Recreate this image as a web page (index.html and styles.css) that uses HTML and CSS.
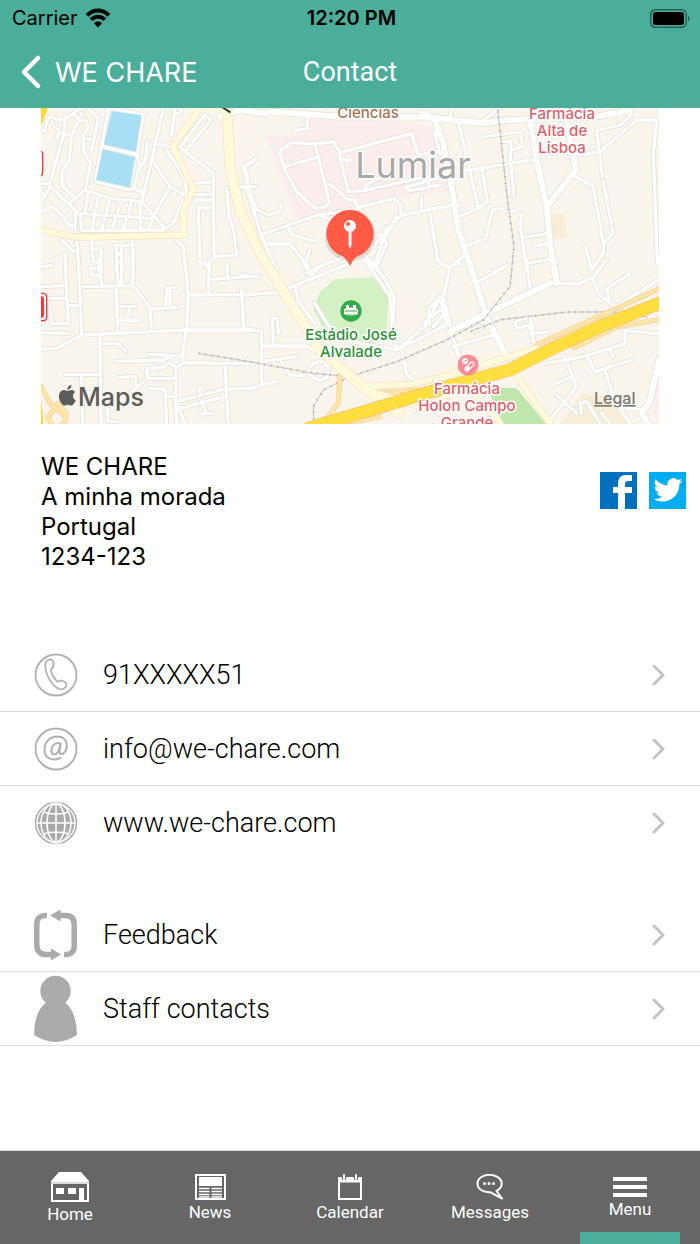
FILE: index.html
```html
<!DOCTYPE html>
<html lang="en">
<head>
<meta charset="utf-8">
<meta name="viewport" content="width=device-width, initial-scale=1">
<title>Contact</title>
<link rel="stylesheet" href="styles.css">
</head>
<body>
<div class="app">
  <header class="header">
    <div class="status">
      <div class="carrier">
        <span>Carrier</span>
        <svg width="26" height="20" viewBox="0 0 26 20" fill="none" stroke="#000" stroke-width="4" aria-hidden="true">
          <path d="M2 7.2Q13-2.2 24 7.2"/><path d="M6 11.6Q13 5.6 20 11.6"/><path d="M9 15.2Q13 11.4 17 15.2L13 19.4Z" fill="#000" stroke="none"/>
        </svg>
      </div>
      <time class="clock">12:20 PM</time>
      <svg class="battery" width="41" height="19" viewBox="0 0 41 19" aria-hidden="true">
        <rect x=".8" y=".8" width="35.4" height="17.4" rx="4.5" fill="none" stroke="#000" stroke-opacity=".45" stroke-width="1.5"/>
        <rect x="3" y="3" width="31" height="13" rx="2.5"/><path d="M38 6.5q3 3 0 6z" opacity=".5"/>
      </svg>
    </div>
    <nav class="navbar">
      <button class="back" type="button">
        <svg width="21" height="34" viewBox="0 0 21 34" fill="none" stroke="#fff" stroke-width="4.5" stroke-linecap="round" stroke-linejoin="round" aria-hidden="true"><path d="M18 3 4 17 18 31"/></svg>
        <span>WE CHARE</span>
      </button>
      <h1 class="title">Contact</h1>
    </nav>
  </header>

  <main class="main">
    <section class="map" aria-label="Map">
      <svg class="map-canvas" viewBox="0 0 618 316">
        <defs>
          <g id="minor">
            <g transform="translate(-33 -24)">
              <path d="M33 95 45 92 50 65 60 50 95 62 130 40 150 24M80 115 87 90 75 80M105 60 100 105 60 250 33 250M95 100 125 105M155 40 125 105 118 180 95 215 97 255 130 290M130 40 150 65 168 60 175 80 160 105 160 150 182 190 165 270 120 310M175 24 205 55 185 150M170 115 190 120"/>
              <path d="M235 24 215 140 195 245 295 270 310 265 340 280M245 24 340 45 320 165 330 195 310 265M215 140 320 163M352 125 347 175 330 205M400 24 365 180 335 305M375 130 420 140M435 24 425 105M436 42 450 40 455 24M365 180 420 260 465 285M420 260 370 350M410 150 465 235 470 280"/>
              <path d="M335 305 405 385M405 385 430 370 460 300M165 270 240 295 335 305M145 340 365 355M155 392 400 390M175 280 165 340M150 340 155 390M205 290 185 390M240 295 215 390M275 300 245 390M305 303 280 390M330 305 332 390M370 350 355 390M60 260 120 315 145 340M95 255 130 290M33 335 65 318 105 355 115 375 135 378M60 260 33 305M45 290 33 275M135 330 137 395"/>
              <path d="M450 140 525 45 543 60 465 155 550 220 552 470 620 465 610 385 597 350 590 265M450 140 465 155M495 250 550 245M495 283 550 283M495 300 550 300M550 324 505 324 510 485 530 495 555 470M530 495 540 510M33 500 65 497M105 460 108 510M95 420 130 455 145 450M140 415 147 510M185 420 190 485 215 490M185 445 215 447M212 447 215 510M255 437 305 435M260 437 260 510M275 437 275 510M260 462 275 462M260 485 275 485M308 415 310 510M435 415 460 440 467 510M670 185 645 200 655 250M625 260 680 260"/>
            </g>
            <g transform="translate(597 -24)">
              <path d="M205 40 200 88 165 90M50 175 10 200 25 260 50 330 85 345 120 335 122 310M0 260 20 265 65 410 110 510M118 155 155 128 225 132 280 125 295 150 325 275 370 272 560 230 660 215M118 155 135 210 170 275 225 325 255 322 268 305 225 132M135 200 230 172M258 250 280 260 325 300 345 300 355 325M300 158 515 100 535 165 595 155M300 180 335 180"/>
              <path d="M60 405 235 345 310 335 460 295 480 310 483 345M235 345 300 370M483 345 640 315 660 315M545 290 545 335M483 345 400 440 260 490 200 520M145 385 155 403 225 425M75 432 150 432 205 500M210 450 195 490M570 340 595 485 625 500 660 490M583 95 600 160M380 270 375 255 420 235M600 255 510 272 495 262 590 235M560 235 570 260M375 465 410 510M440 380 430 420 400 500M420 400 440 430 410 500M470 350 420 440"/>
            </g>
            <g transform="translate(1227 -24)">
              <path d="M100 60 150 24M5 24 0 50M25 65 85 325 25 350M95 200 112 305 85 325M20 215 60 210 255 178M105 110 210 95 218 140 185 150 180 122 160 125M180 150 192 290M45 440 108 415 127 330 155 325 165 335 200 330M380 165 450 155 560 60 620 60 610 160 622 490 635 500M540 24 540 50 510 75 440 92 457 230M460 245 490 400 460 430M370 225 430 260 460 430 460 460 425 510M407 440 425 510M217 340 210 370 230 510M217 412 295 400M255 438 298 430M230 490 300 478M0 500 40 470M130 515 170 497"/>
            </g>
            <g transform="translate(-33 456)">
              <path d="M33 20 65 17M33 80 105 77M105 0 115 190 65 190 60 150M33 115 110 115M110 137 150 137M33 218 115 220M145 0 155 225M33 268 80 265 155 225 465 210 670 210M155 80 310 77 360 140 365 215M258 80 263 215M265 140 315 140M265 183 330 180M300 140 290 180M365 147 445 142M407 145 410 85 435 82M420 85 420 145M310 0 308 75M205 0 215 72M205 25 180 25 185 45 205 48M260 0 265 75M275 0 275 75"/>
              <path d="M465 0 475 105 470 205 457 285M475 105 670 103M535 100 538 15 515 10M538 58 660 50M592 12 592 55M635 90 642 205M210 230 213 490M210 250 265 250 287 272M260 304 400 300 420 290M355 283 460 288 462 308 670 312M462 308 440 322 415 308 405 320 350 327 353 355 305 395M265 352 315 350 318 375M353 355 437 355M437 322 437 420 465 490M105 343 210 343M155 345 158 490M165 397 210 397M358 385 405 388 410 490M410 410 437 410M440 425 585 387 670 385M450 445 585 410M585 312 595 490M508 380 512 400M515 425 530 460M510 462 548 460M437 420 440 490M232 440 235 485 260 485"/>
            </g>
            <g transform="translate(597 456)">
              <path d="M0 45 60 52M0 105 110 98 330 10M165 80 175 125 225 190M190 10 215 45 240 20M5 90 10 205 65 215 65 375 35 385 0 385M65 375 110 365M100 255 97 175 112 175 115 220M65 258 200 258 225 275M65 305 170 290M125 305 150 345 195 347M220 310 245 302 265 320 262 350 240 362 215 350 205 330ZM225 130 270 205 330 245 420 260 470 270M375 0 450 110 455 200 470 270M390 0 430 50 462 110 460 190M470 270 560 195 600 110M470 270 620 195 600 110 565 150 570 190M485 265 500 345 520 360 560 360M590 0 630 25 610 110 640 240 655 280M550 190 600 150M580 200 610 165"/>
            </g>
            <g transform="translate(1227 456)">
              <path d="M85 65 170 18M230 0 240 80M300 70 385 72 430 50 470 0M425 50 445 100 495 140 627 60M540 42 470 85 480 130M10 260 130 225M0 215 20 270 25 290M75 215 100 200M255 250 235 195 200 205 195 185 240 170 250 220 295 215M627 222 525 212 525 250 480 265 400 290 290 310M480 265 490 290M410 285 435 335 545 300M465 330 490 410M345 290 380 380 300 480M320 370 365 350M320 405 380 460M500 440 580 450M395 460 390 430 410 425 450 490M455 460 480 490M500 430 540 490"/>
            </g>
          </g>
          <g id="main">
            <g transform="translate(597 -24)"><path d="M-60 50 0 30 70 40 100 35 300 50 560 50 660 62 730 70 810 60 1070 50 1170 30M550 40 585 60 610 130 635 260 655 390 695 510 740 650 800 770M870 60 890 180 920 320 930 430 950 550M980 60 1008 210 920 320"/></g>
            <g transform="translate(1227 456)"><path d="M320 65 310 0M300 70 215 110 100 165 0 215M627 300 600 420 575 460 600 500"/></g>
          </g>
          <g id="avenue">
            <path d="M0 366 107 388 427 381 427 306 457 241 395 116 477 0"/>
            <path d="M440 -5 557 5" stroke-width="12"/>
            <path d="M977 836 1117 828 1227 801 1487 721M1417 790 1530 950M1280 830 1380 950M990 850 1150 900 1227 860"/>
          </g>
          <path id="boulevard" d="M557 0 567 176 597 306 657 436 837 726 977 846 1077 916"/>
          <path id="ramp" d="M897 801 892 886 857 931M917 946 1017 926M997 856 1137 846M1487 710 1860 540M1600 720 1727 656 1854 635M0 836 30 890 75 925 70 948 40 960 20 930 50 888 75 915"/>
          <path id="highway" d="M805 960 997 903 1227 834 1407 785 1527 725 1677 655 1860 584"/>
        </defs>

        <g transform="scale(.333333)">
          <path class="land" d="M0 0H1854V948H0Z"/>
          <path class="campus" d="M677 84 787 81 807 21 1117 46 1187 66 1227 246 1057 266 767 336ZM1854 790 1832 900 1854 948Z"/>
          <path class="block" d="M1527 321 1567 314 1580 388 1537 396ZM1622 856 1697 866 1767 950 1557 950Z"/>
          <path class="stadium" d="M882 514 997 508 1007 521 1017 518 1042 556 1037 666 997 706 867 696 817 606 837 551Z"/>
          <path class="park" d="M1337 836 1427 841 1515 948 1387 948Z"/>
          <use href="#minor" class="casing minor"/>
          <use href="#main" class="casing wide"/>
          <use href="#minor" class="road minor"/>
          <use href="#main" class="road wide"/>
          <path class="pool" d="M212 10 302 21 285 131 189 109ZM185 124 282 148 267 238 165 216Z"/>
          <path class="rail" d="M1370 6 1377 66 1397 256 1419 416 1407 536 1367 586 1327 636 1227 691 1070 760 927 806 847 846 817 896 819 948M472 736 597 756 707 776 817 796 927 806M1290 670 1380 635 1580 612 1730 612 1820 628"/>
          <path class="rail ties" d="M1370 6 1377 66 1397 256 1419 416 1407 536 1367 586 1327 636 1227 691 1070 760 927 806 847 846 817 896 819 948M472 736 597 756 707 776 817 796 927 806M1290 670 1380 635 1580 612 1730 612 1820 628"/>
          <use href="#ramp" class="ramp-edge"/><use href="#ramp" class="ramp"/>
          <use href="#avenue" class="avenue-edge"/><use href="#boulevard" class="avenue-edge broad"/>
          <use href="#avenue" class="avenue"/><use href="#boulevard" class="avenue broad"/>
          <use href="#highway" class="highway-edge"/><use href="#highway" class="highway"/>
          <path class="highway-fill" d="M0 0H21L0 55ZM0 870 8 948H0Z"/>
          <path class="tunnel" d="M540-5 568 13"/>
          <path class="shield" d="M0 130q6 2 5 12v50q0 8-5 12"/>
          <path class="shield-plate" d="M-20 556H5q12 0 12 12v58q0 12-12 12H-20Z"/>
          <path class="shield-fill" d="M0 564q9 0 9 9v48q0 9-9 9Z"/>
        </g>

        <g class="label">
          <text class="brown" x="327" y="10">Ciências</text>
          <text class="district" x="372" y="70">Lumiar</text>
          <text class="red" x="521" y="11">Farmácia</text>
          <text class="red" x="521" y="28">Alta de</text>
          <text class="red" x="521" y="45">Lisboa</text>
          <text class="green" x="310" y="232">Estádio José</text>
          <text class="green" x="310" y="249">Alvalade</text>
          <text class="red" x="426" y="286">Farmácia</text>
          <text class="red" x="426" y="303">Holon Campo</text>
          <text class="red" x="426" y="320">Grande</text>
        </g>

        <circle cx="310" cy="203" r="10.7" fill="#34ab48"/>
        <path d="M303 201q7-3 14 0v5q-7 3-14 0zM305 197h3v3h-3zM312 197h3v3h-3z" fill="#fff"/>
        <path d="M304 203h12M307 206v2M310 206v2M313 206v2" stroke="#34ab48"/>
        <circle cx="427" cy="257" r="10.5" fill="#f98d93"/>
        <circle cx="424" cy="253" r="3" fill="#fff"/><path d="M422 254l4-2" stroke="#f98d93"/>
        <path d="M426 261l5-5" stroke="#fff" stroke-width="5" stroke-linecap="round"/><path d="M429 258l2-2" stroke="#f98d93" stroke-width="2.5" stroke-linecap="round"/>

        <ellipse cx="309" cy="130" rx="25" ry="23" fill="#000" opacity=".1"/>
        <path d="M309 102a23.7 23.7 0 0 1 9 45.600C313 150 311 154 309 158C307 154 305 150 300 147.600A23.700 23.700 0 0 1 309 102Z" fill="#ff5a45"/>
        <circle cx="309" cy="118" r="6" fill="#fff"/><path d="M307.500 123h3v14l-1.500 4-1.500-4z" fill="#fff"/><circle cx="307" cy="116" r="2" fill="#ff5a45"/>

        <g class="brand">
          <path transform="translate(16 277) scale(.86)" d="M12.152 6.896c-.948 0-2.415-1.078-3.960-1.040-2.040.027-3.910 1.183-4.961 3.014-2.117 3.675-.546 9.103 1.519 12.090 1.013 1.454 2.208 3.090 3.792 3.039 1.520-.065 2.090-.987 3.935-.987 1.831 0 2.350.987 3.960.948 1.637-.026 2.676-1.480 3.676-2.948 1.156-1.688 1.636-3.325 1.662-3.415-.039-.013-3.182-1.221-3.220-4.857-.026-3.040 2.480-4.494 2.597-4.559-1.429-2.090-3.623-2.324-4.390-2.376-2-.156-3.675 1.090-4.610 1.090zM15.530 3.830c.843-1.012 1.400-2.427 1.245-3.830-1.207.052-2.662.805-3.532 1.818-.780.896-1.454 2.338-1.273 3.714 1.338.104 2.715-.688 3.559-1.701"/>
          <text class="maps" x="37" y="298">Maps</text>
          <a href="#legal"><text class="legal" x="553" y="296">Legal</text></a>
        </g>
      </svg>
    </section>

    <section class="info">
      <address class="address">WE CHARE<br>A minha morada<br>Portugal<br>1234-123</address>
      <div class="social">
        <a href="#facebook" aria-label="Facebook"><svg viewBox="0 0 37 37"><path fill="#006fbe" d="M0 0h37v37H0z"/><path fill="#fff" d="M18 37V21h-5v-6h5v-3c0-6 3-9 8-9h6v6h-4c-2 0-3 1-3 3v3h7v6h-7v16z"/></svg></a>
        <a href="#twitter" aria-label="Twitter"><svg viewBox="0 0 37 37"><path fill="#00adf2" d="M0 0h37v37H0z"/><path fill="#fff" transform="translate(4.500 3.500) scale(1.200)" d="M23.953 4.570a10 10 0 01-2.825.775 4.958 4.958 0 002.163-2.723c-.951.555-2.005.959-3.127 1.184a4.920 4.920 0 00-8.384 4.482C7.690 8.095 4.067 6.130 1.640 3.162a4.822 4.822 0 00-.666 2.475c0 1.710.870 3.213 2.188 4.096a4.904 4.904 0 01-2.228-.616v.060a4.923 4.923 0 003.946 4.827 4.996 4.996 0 01-2.212.085 4.936 4.936 0 004.604 3.417 9.867 9.867 0 01-6.102 2.105c-.390 0-.779-.023-1.170-.067a13.995 13.995 0 007.557 2.209c9.053 0 13.998-7.496 13.998-13.985 0-.210 0-.420-.015-.630A9.935 9.935 0 0024 4.590z"/></svg></a>
      </div>
    </section>

    <ul class="list">
      <li class="item"><a class="row" href="tel:91">
        <svg class="icon" viewBox="0 0 44 44" fill="none" stroke="#b0b0b0" stroke-width="1.800"><circle cx="22" cy="22" r="20.500"/><path stroke-linejoin="round" d="M11.500 9.500C13 6.500 17 5.500 18.500 7.500C20 9.500 19.500 13 18.500 15C17.500 16 16.500 16.500 17 18C18 22 20.500 26 23.500 28.500C25 29 26 27.500 27.500 27.500C29.500 28 32 30 32.500 32C32.500 35 28 37 25 36C17 32 10 20 11.500 9.500Z"/></svg>
        <span class="text">91XXXXX51</span>
        <svg class="chevron" viewBox="0 0 14 22"><path d="M3 2 12 11 3 20"/></svg></a></li>
      <li class="item"><a class="row" href="mailto:info@we-chare.com">
        <svg class="icon" viewBox="0 0 44 44" fill="none" stroke="#b0b0b0" stroke-width="1.800"><circle cx="22" cy="22" r="20.500"/><path stroke-width="2" stroke-linecap="round" d="M26.500 16.500C24 15.500 21 16 19 18.500C16.500 22 17 27 20 27.500C23 27.500 25.500 23 26.500 16.500ZM26.500 16.500 25.500 24.500C25.500 27.500 28 28 30.500 25.500C34 21 34.500 10 23.500 9.500C15 9.500 10.500 16 10.500 22.500C10.500 31.500 18 34.500 26.500 31"/></svg>
        <span class="text">info@we-chare.com</span>
        <svg class="chevron" viewBox="0 0 14 22"><path d="M3 2 12 11 3 20"/></svg></a></li>
      <li class="item"><a class="row" href="#website">
        <svg class="icon" viewBox="0 0 44 44" fill="none" stroke="#fff" stroke-width="1.500"><circle cx="22" cy="22" r="20.500" stroke="#aaa"/><circle cx="22" cy="22" r="18.500" fill="#aaa" stroke="none"/><path d="M22 3V41M3 22H41M9 11Q22 15 35 11M9 33Q22 29 35 33"/><ellipse cx="22" cy="22" rx="9" ry="19"/><ellipse cx="22" cy="22" rx="15" ry="20"/></svg>
        <span class="text">www.we-chare.com</span>
        <svg class="chevron" viewBox="0 0 14 22"><path d="M3 2 12 11 3 20"/></svg></a></li>
    </ul>

    <ul class="list">
      <li class="item"><a class="row" href="#feedback">
        <svg class="icon feedback" viewBox="0 0 44 52"><path fill="none" stroke="#aaa" stroke-width="5.500" d="M13 6.500C6 6 2.800 9 2.800 15V36C2.800 42 6 45.500 12 45.500H19M30 45.500C37 46 40.200 43 40.200 37V16C40.200 10 38 6.500 32 6.500H25"/><path fill="#aaa" d="M16 6.500 26.500.5V12.500ZM27 45.500 17 39.500V51.500Z"/></svg>
        <span class="text">Feedback</span>
        <svg class="chevron" viewBox="0 0 14 22"><path d="M3 2 12 11 3 20"/></svg></a></li>
      <li class="item closed"><a class="row" href="#staff">
        <svg class="icon staff" viewBox="0 0 44 68" fill="#aaa"><circle cx="21.500" cy="16" r="15.200"/><path d="M13 27C5 32 0 44 .2 60Q21.500 74 42.800 60C43 44 38 32 30 27Z"/></svg>
        <span class="text">Staff contacts</span>
        <svg class="chevron" viewBox="0 0 14 22"><path d="M3 2 12 11 3 20"/></svg></a></li>
    </ul>
  </main>

  <nav class="tabs" aria-label="Main">
    <a class="tab" href="#home">
      <svg width="38" height="30" viewBox="0 0 38 30"><path fill="#fff" d="M8 0H30L38 9V10H0V9Z"/><path fill="#ddd" d="M0 10H38V12H0Z"/><path fill="none" stroke="#fff" stroke-width="2" d="M1 12V29H37V12"/><path fill="#fff" d="M5 16H13V22H5ZM17 16H25V22H17ZM28 16H33V29H28Z"/></svg>
      <span>Home</span></a>
    <a class="tab" href="#news">
      <svg width="31" height="26" viewBox="0 0 31 26"><path fill="none" stroke="#fff" stroke-width="2" d="M1 1H30V25H1Z"/><path fill="#fff" d="M4 3H27V12H4Z"/><path stroke="#fff" stroke-width="1.700" d="M4 14.500H14.500M16.500 14.500H27M4 17.500H14.500M16.500 17.500H27M4 20.500H14.500M16.500 20.500H27M4 23H14.500M16.500 23H27"/></svg>
      <span>News</span></a>
    <a class="tab" href="#calendar">
      <svg width="26" height="26" viewBox="0 0 26 26"><path fill="none" stroke="#fff" stroke-width="2" d="M2 4H24V25H2Z"/><path fill="#fff" d="M1 3H25V8.500H1Z"/><path stroke="#666" stroke-width="4.500" stroke-linecap="round" d="M7 1V4M19 1V4"/><path stroke="#fff" stroke-width="2" stroke-linecap="round" d="M7 1V5M19 1V5"/></svg>
      <span>Calendar</span></a>
    <a class="tab" href="#messages">
      <svg width="28" height="26" viewBox="0 0 28 26"><path fill="none" stroke="#fff" stroke-width="2" stroke-linejoin="round" d="M20.500 17C28 13 27 5 20 2.200C12-1 1.500 2 1.500 9.500C1.500 15 7 18.500 14 18.200L26 24.500Z"/><g fill="#fff"><circle cx="8.500" cy="9.500" r="1.500"/><circle cx="13" cy="9.500" r="1.500"/><circle cx="17.500" cy="9.500" r="1.500"/></g></svg>
      <span>Messages</span></a>
    <a class="tab active" href="#menu" aria-current="page">
      <svg width="34" height="20" viewBox="0 0 34 20"><path fill="#fff" d="M0 0H34V4H0ZM0 8H34V12H0ZM0 16H34V20H0Z"/></svg>
      <span>Menu</span></a>
  </nav>
</div>
</body>
</html>
```
FILE: styles.css
```css
* { box-sizing: border-box; }

body {
  margin: 0;
  background: #fff;
  color: #000;
  font-family: Inter, "Liberation Sans", sans-serif;
}

a { color: inherit; text-decoration: none; }
svg { display: block; flex: none; }

.app {
  display: flex;
  flex-direction: column;
  min-height: 100vh;
}

/* Header */
.header { background: #4aae9a; }

.status,
.navbar {
  display: grid;
  grid-template-columns: 1fr auto 1fr;
  align-items: center;
}

.status {
  height: 36px;
  padding: 0 9px 0 12px;
  font-size: 20px;
}

.carrier {
  display: flex;
  align-items: center;
  gap: 7px;
}

.clock { font-weight: 600; }
.battery { justify-self: end; }

.navbar {
  height: 72px;
  padding: 0 20px;
  color: #fff;
}

.back {
  display: flex;
  align-items: center;
  justify-self: start;
  gap: 14px;
  padding: 0;
  border: 0;
  background: none;
  color: inherit;
  font: 27px Inter, "Liberation Sans", sans-serif;
}

.title {
  margin: 0;
  font: 27px Roboto, sans-serif;
}

/* Map */
.main { flex: 1; }
.map { padding: 0 41px; }

.map-canvas {
  width: 100%;
  height: auto;
  overflow: hidden;
}

.land { fill: #f9f5ed; }
.campus { fill: #faedeb; }
.block { fill: #f7eed8; }
.stadium { fill: #d3f1c4; }
.park { fill: #bfe6ad; }
.pool { fill: #a9dff4; }

.casing, .road, .rail, .ramp, .ramp-edge,
.avenue, .avenue-edge, .highway, .highway-edge {
  fill: none;
  stroke-linecap: round;
  stroke-linejoin: round;
}

.casing { stroke: #e3ddd5; }
.road { stroke: #fff; }
.casing.minor { stroke-width: 14px; }
.road.minor { stroke-width: 10px; }
.casing.wide { stroke-width: 22px; }
.road.wide { stroke-width: 18px; }
.rail { stroke: #b0adaa; stroke-width: 2px; }
.rail.ties { stroke-width: 7px; stroke-dasharray: 3 17; stroke-linecap: butt; }
.ramp-edge { stroke: #f5cd95; stroke-width: 15px; }
.ramp { stroke: #ffe5a6; stroke-width: 11px; }
.avenue-edge { stroke: #f8dfbd; stroke-width: 21px; }
.avenue { stroke: #fdfadb; stroke-width: 17px; }
.avenue-edge.broad { stroke-width: 32px; }
.avenue.broad { stroke-width: 28px; }
.highway-edge { stroke: #f5bd6a; stroke-width: 39px; }
.highway { stroke: #ffdf40; stroke-width: 35px; }
.highway-fill { fill: #ffd93c; }
.tunnel { stroke: #333; stroke-width: 6px; }
.shield { fill: #fff; stroke: #f33; stroke-width: 4px; }
.shield-plate { fill: #fff; stroke: #f33; stroke-width: 4px; }
.shield-fill { fill: #f33; }

.label text {
  font-size: 15px;
  font-weight: 500;
  text-anchor: middle;
  paint-order: stroke;
  stroke: #fff;
  stroke-width: 3px;
  stroke-linejoin: round;
}

.label .brown { fill: #a9734e; }
.label .red { fill: #de5f68; }
.label .green { fill: #2b9130; }
.label .district { fill: #a8a8a4; font-size: 36px; font-weight: 400; }

.brand { fill: #5d5c59; }
.maps { font-size: 25px; font-weight: 500; }
.legal { fill: #777; font-size: 16px; font-weight: 500; text-decoration: underline; }

/* Address */
.info {
  display: flex;
  justify-content: space-between;
  align-items: flex-start;
  padding: 28px 14px 0 41px;
}

.address {
  font-size: 24px;
  font-style: normal;
  line-height: 30px;
}

.social {
  display: flex;
  gap: 12px;
  padding-top: 20px;
}

.social svg { width: 37px; height: 37px; }

/* Rows */
.list {
  margin: 66px 0 0;
  padding: 0;
  list-style: none;
}

.list + .list { margin-top: 38px; }

.item { height: 74px; }

.item:not(:last-child),
.closed { border-bottom: 1px solid #dcdcdc; }

.row {
  display: flex;
  align-items: center;
  gap: 25px;
  height: 100%;
  padding: 0 35px 0 34px;
}

.icon { width: 44px; height: 44px; }
.feedback { height: 52px; }
.staff { height: 68px; }

.text {
  flex: 1;
  font-family: Roboto, sans-serif;
  font-size: 27px;
  font-weight: 300;
}

.chevron {
  width: 14px;
  height: 22px;
  fill: none;
  stroke: #c4c4c6;
  stroke-width: 3px;
  stroke-linecap: round;
  stroke-linejoin: round;
}

/* Tab bar */
.tabs {
  display: grid;
  grid-template-columns: repeat(5, 1fr);
  height: 94px;
  border-top: 1px solid #d4dada;
  background: #666;
}

.tab {
  position: relative;
  display: flex;
  flex-direction: column;
  align-items: center;
  justify-content: center;
  gap: 2px;
  color: #fff;
  font: 17px/20px Roboto, sans-serif;
}

.active::after {
  content: "";
  position: absolute;
  right: 20px;
  bottom: 0;
  left: 20px;
  height: 12px;
  background: #4aae9a;
}
```
